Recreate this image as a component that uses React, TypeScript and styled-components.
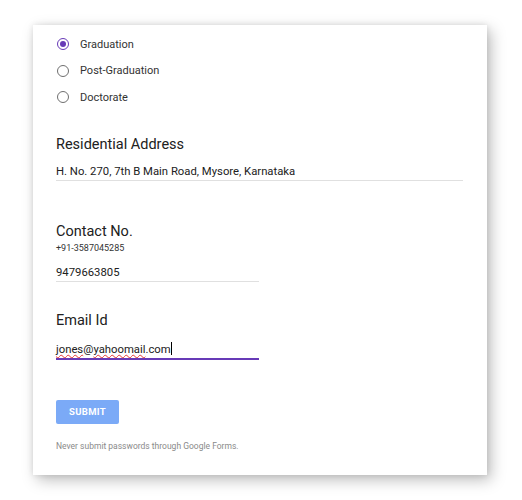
import React from "react";
import styled, { createGlobalStyle } from "styled-components";

const Global = createGlobalStyle`
  html, body { margin: 0; padding: 0; background: #ffffff; }
  body { font-family: Roboto, "Liberation Sans", Arial, sans-serif; color: #212121; }
`;

const Page = styled.div`
  padding: 25px 0 25px 33px;
`;

const Card = styled.div`
  box-sizing: border-box;
  width: 454px;
  height: 450px;
  background: #fff;
  box-shadow: 4px 5px 14px rgba(0, 0, 0, 0.26), 0 0 6px rgba(0, 0, 0, 0.1);
  padding: 6px 24px 0 23px;
  display: flex;
  flex-direction: column;
`;

const RadioGroup = styled.div`
  display: flex;
  flex-direction: column;
`;

const RadioRow = styled.label`
  height: 26.5px;
  display: flex;
  align-items: center;
  gap: 11px;
  font-size: 11px;
  color: #333;
  padding-left: 1px;
`;

const RadioCircle = styled.span<{ $checked?: boolean }>`
  box-sizing: border-box;
  width: 12px;
  height: 12px;
  border-radius: 50%;
  border: 1.6px solid ${(p) => (p.$checked ? "#673ab7" : "#6f6f6f")};
  display: flex;
  align-items: center;
  justify-content: center;
  &::after {
    content: "";
    display: ${(p) => (p.$checked ? "block" : "none")};
    width: 6px;
    height: 6px;
    border-radius: 50%;
    background: #673ab7;
  }
`;

const Title = styled.div<{ $mt: number }>`
  margin-top: ${(p) => p.$mt}px;
  font-size: 14.5px;
  line-height: 20px;
  color: #212121;
`;

const Hint = styled.div`
  font-size: 9px;
  line-height: 12px;
  color: #333;
`;

const Field = styled.div<{ $w: number; $mt: number; $focused?: boolean }>`
  box-sizing: content-box;
  width: ${(p) => p.$w}px;
  margin-top: ${(p) => p.$mt}px;
  height: 16px;
  font-size: 11.3px;
  line-height: 16px;
  color: #212121;
  border-bottom: ${(p) => (p.$focused ? "2px solid #673ab7" : "1px solid #e0e0e0")};
  white-space: nowrap;
`;

const Misspelled = styled.span`
  text-decoration: underline wavy #e53935;
  text-decoration-thickness: 1px;
  text-underline-offset: 1px;
  text-decoration-skip-ink: none;
`;

const Caret = styled.span`
  display: inline-block;
  width: 1px;
  height: 13px;
  background: #000;
  vertical-align: -2px;
`;

const SubmitButton = styled.button`
  margin-top: 40px;
  width: 63px;
  height: 24px;
  border: none;
  border-radius: 2px;
  background: #7baaf7;
  color: #fff;
  font-family: Roboto, "Liberation Sans", Arial, sans-serif;
  font-weight: 700;
  font-size: 9.5px;
  letter-spacing: 0.3px;
  padding: 0;
`;

const Footer = styled.div`
  margin-top: 16px;
  font-size: 8.5px;
  line-height: 12px;
  color: #8a8a8a;
`;

export default function App() {
  return (
    <>
      <Global />
      <Page>
        <Card>
          <RadioGroup>
            <RadioRow>
              <RadioCircle $checked />
              Graduation
            </RadioRow>
            <RadioRow>
              <RadioCircle />
              Post-Graduation
            </RadioRow>
            <RadioRow>
              <RadioCircle />
              Doctorate
            </RadioRow>
          </RadioGroup>

          <Title $mt={24}>Residential Address</Title>
          <Field $w={407} $mt={9}>
            H. No. 270, 7th B Main Road, Mysore, Karnataka
          </Field>

          <Title $mt={41}>Contact No.</Title>
          <Hint>+91-3587045285</Hint>
          <Field $w={203} $mt={11}>
            9479663805
          </Field>

          <Title $mt={29}>Email Id</Title>
          <Field $w={203} $mt={11} $focused>
            <Misspelled>jones</Misspelled>@<Misspelled>yahoomail</Misspelled>.com
            <Caret />
          </Field>

          <div>
            <SubmitButton>SUBMIT</SubmitButton>
          </div>
          <Footer>Never submit passwords through Google Forms.</Footer>
        </Card>
      </Page>
    </>
  );
}
